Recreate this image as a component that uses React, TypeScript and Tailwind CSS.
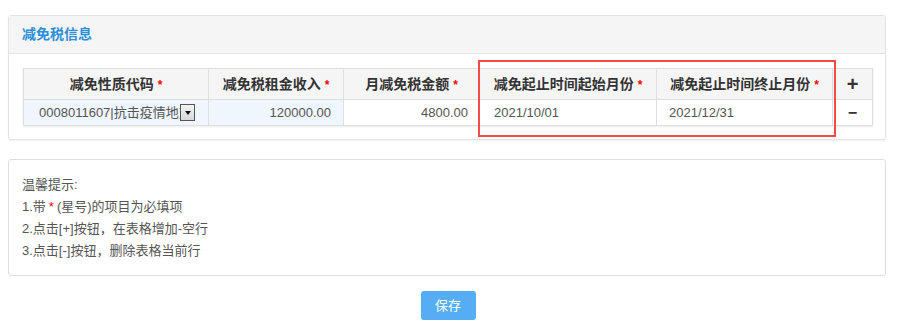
const font = { fontFamily: '"Liberation Sans", "Noto Sans CJK SC", sans-serif' };

const Star = () => <span className="text-[#ff0000] ml-1 text-[12px]">*</span>;

const headers = [
  { label: "减免性质代码", w: "w-[185px]" },
  { label: "减免税租金收入", w: "w-[135px]" },
  { label: "月减免税金额", w: "w-[136px]" },
  { label: "减免起止时间起始月份", w: "w-[177px]" },
  { label: "减免起止时间终止月份", w: "w-[176px]" },
];

const App = () => {
  return (
    <div className="bg-white w-[900px] h-[330px] pt-[15px] text-[13px] text-[#555]" style={font}>
      <div className="relative ml-2 w-[878px] border border-[#e3e3e3] rounded-[3px] shadow-[0_1px_2px_rgba(0,0,0,0.06)]">
        <div className="h-[38px] bg-[#f5f5f5] border-b border-[#e6e6e6] flex items-center px-[13px]">
          <span className="text-[#2b8ed8] font-bold text-[14px]">减免税信息</span>
        </div>
        <div className="px-[14px] pt-[14px] pb-[13px]">
          <table className="border-collapse table-fixed w-[849px] border border-[#dedede] shadow-[0_1px_2px_rgba(0,0,0,0.08)]">
            <thead>
              <tr className="h-[31px] bg-[#f5f5f5]">
                {headers.map((h) => (
                  <th key={h.label} className={`${h.w} border border-[#dedede] font-bold text-[#333] text-[14px] text-center`}>
                    {h.label}
                    <Star />
                  </th>
                ))}
                <th className="w-[40px] border border-[#dedede] text-[#333] text-[20px] font-bold leading-none">+</th>
              </tr>
            </thead>
            <tbody>
              <tr className="h-[26px]">
                <td className="border border-[#dedede] bg-[#eff6fd] pl-[15px]">
                  <div className="flex items-center">
                    <span className="w-[141px] overflow-hidden whitespace-nowrap text-[#555]">
                      0008011607|抗击疫情地方减免
                    </span>
                    <span className="w-[15px] h-[17px] border border-[#555] bg-gradient-to-b from-[#f4f4f4] to-[#d8d8d8] flex items-center justify-center">
                      <span className="w-0 h-0 border-l-[3px] border-r-[3px] border-t-[4px] border-l-transparent border-r-transparent border-t-[#111]" />
                    </span>
                  </div>
                </td>
                <td className="border border-[#dedede] bg-[#eff6fd] text-right pr-[12px]">120000.00</td>
                <td className="border border-[#dedede] text-right pr-[11px]">4800.00</td>
                <td className="border border-[#dedede] pl-[14px]">2021/10/01</td>
                <td className="border border-[#dedede] pl-[12px]">2021/12/31</td>
                <td className="border border-[#dedede] text-center text-[#333] font-bold text-[16px] leading-none">−</td>
              </tr>
            </tbody>
          </table>
        </div>
        <div className="absolute left-[469px] top-[44px] w-[358px] h-[77px] border-2 border-[#f54a4a] pointer-events-none" />
      </div>

      <div className="ml-2 mt-[19px] w-[878px] border border-[#dedede] rounded-[3px] px-[13px] pt-[14px] pb-[13px] leading-[22px] text-[#555]">
        <p>温馨提示:</p>
        <p>
          1.带<span className="text-[#ff0000] mx-[3px]">*</span>(星号)的项目为必填项
        </p>
        <p>2.点击[+]按钮，在表格增加-空行</p>
        <p>3.点击[-]按钮，删除表格当前行</p>
      </div>

      <div className="flex justify-center mt-[15px] pr-[4px]">
        <button className="w-[55px] h-[29px] bg-[#55adf3] text-white rounded-[3px] text-[13px]">保存</button>
      </div>
    </div>
  );
};

export default App;
